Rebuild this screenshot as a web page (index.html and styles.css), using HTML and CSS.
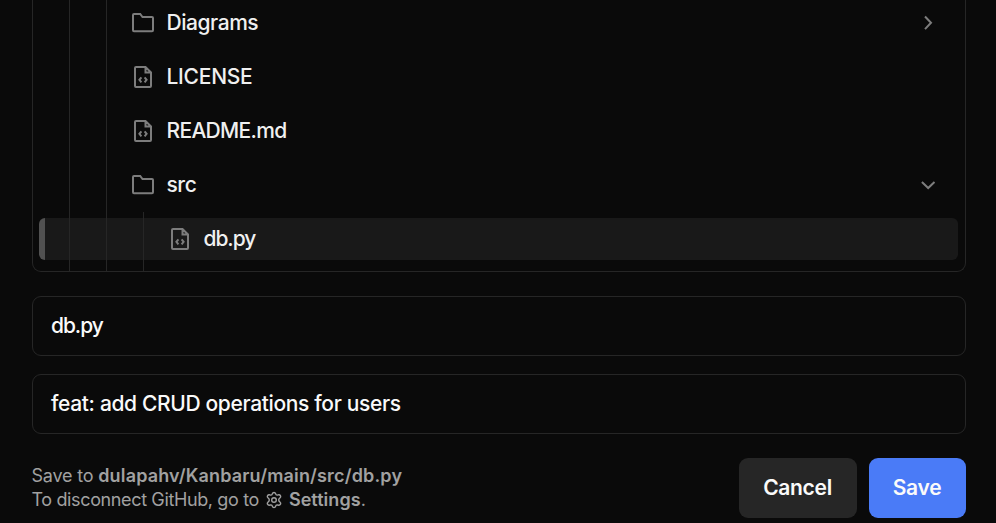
FILE: index.html
```html
<!DOCTYPE html>
<html lang="en">
<head>
<meta charset="utf-8">
<title>Save to GitHub</title>
<link rel="stylesheet" href="styles.css">
</head>
<body>
<svg class="sprite" aria-hidden="true">
  <symbol id="folder" viewBox="0 0 24 24"><path d="M2 19.200V4q0-1 1-1h6.200l2.300 3H21q1 0 1 1v12.200q0 1-1 1H3q-1 0-1-1z"/></symbol>
  <symbol id="file" viewBox="0 0 24 24"><path d="M14.500 2H5q-1 0-1 1v18q0 1 1 1h14q1 0 1-1V7.500zM14.500 2v5.500H20M10.400 12.300 8.400 14.800l2 2.500M13.600 12.300l2 2.500-2 2.500"/></symbol>
  <symbol id="chevron" viewBox="0 0 24 24"><path d="m9 5.500 6 6.300-6 6.300"/></symbol>
  <symbol id="gear" viewBox="0 0 18 18"><path d="M9 1.500q1.300 0 1.600 1.200.3 1.500 1.600 1.400l1.500-.3q1.200-.1 1.800 1 .6 1.200-.4 2-1.400 1.100-1.400 2.200t1.400 2.200q1 .8.4 2-.6 1.100-1.800 1l-1.500-.3q-1.300-.1-1.600 1.400Q10.300 16.500 9 16.500t-1.600-1.200q-.3-1.500-1.600-1.400l-1.500.3q-1.200.1-1.800-1-.6-1.200.4-2Q4.300 10.100 4.300 9T2.900 6.800q-1-.8-.4-2 .6-1.100 1.800-1l1.500.3q1.300.1 1.600-1.400Q7.700 1.500 9 1.500z"/><circle cx="9" cy="9" r="2.300"/></symbol>
</svg>
<main class="dialog">
  <div class="tree">
    <div class="branch">
      <div class="branch inner">
        <div class="row"><svg class="icon"><use href="#folder"/></svg><span class="name">Diagrams</span><svg class="icon arrow"><use href="#chevron"/></svg></div>
        <div class="row"><svg class="icon"><use href="#file"/></svg><span class="name license">LICENSE</span></div>
        <div class="row"><svg class="icon"><use href="#file"/></svg><span class="name readme">README.md</span></div>
        <div class="row"><svg class="icon"><use href="#folder"/></svg><span class="name">src</span><svg class="icon arrow open"><use href="#chevron"/></svg></div>
        <div class="branch leaf">
          <div class="row selected"><svg class="icon"><use href="#file"/></svg><span class="name python">db.py</span></div>
        </div>
      </div>
    </div>
  </div>
  <div class="field python">db.py</div>
  <div class="field message">feat: add CRUD operations for users</div>
  <footer class="footer">
    <div class="note">
      <div>Save to <b class="path">dulapahv/Kanbaru/main/src/db.py</b></div>
      <div class="line"><span class="hint">To disconnect GitHub, go to</span><svg class="gear"><use href="#gear"/></svg><b class="settings">Settings</b>.</div>
    </div>
    <div class="actions">
      <button class="button cancel">Cancel</button>
      <button class="button save">Save</button>
    </div>
  </footer>
</main>
</body>
</html>
```
FILE: styles.css
```css
* { box-sizing: border-box; }
body { margin: 0; background: #0a0a0a; color: #fafafa; font: 500 21px/30px Inter, sans-serif; overflow: hidden; }
.sprite { position: absolute; width: 0; height: 0; }
.dialog { width: 934px; margin-left: 32px; }
.tree { height: 272px; border: 1px solid #262626; border-top: 0; border-radius: 0 0 9px 9px; padding-left: 36px; position: relative; z-index: 0; }
.branch { border-left: 1px solid #262626; height: 271px; padding-left: 36px; }
.inner { padding: 2px 0 0; }
.row { height: 42px; margin-bottom: 12px; display: flex; align-items: center; padding: 0 25px 0 24px; gap: 12px; color: #f0f0f0; }
.name { letter-spacing: -.45px; margin-left: -.5px; }
.license { letter-spacing: -.25px; }
.readme { letter-spacing: -.68px; }
.icon { width: 24px; height: 24px; fill: none; stroke: #7d7d7d; stroke-width: 2; flex: none; }
.arrow { margin-left: auto; }
.open { transform: rotate(90deg); }
.leaf { height: 59px; margin: -6px 0 0 36px; padding: 6px 0 0; }
.selected { position: relative; }
.selected::before { content: ""; position: absolute; z-index: -1; left: -105px; right: 7px; top: 0; bottom: 0; border-radius: 6px; background: linear-gradient(90deg, #515151 6px, #191919 6px); }
.field { height: 60px; margin-top: 24px; border: 1px solid #262626; border-radius: 9px; padding: 14px 18px; }
.python { letter-spacing: -1.05px; }
.message { margin-top: 18px; letter-spacing: -.35px; }
.footer { margin-top: 24px; display: flex; justify-content: space-between; }
.note { margin: 6px 0 0 -.5px; font: 400 18px/24px Inter, sans-serif; color: #a1a1a1; letter-spacing: -.2px; }
.note b { font-weight: 600; }
.path { letter-spacing: .16px; }
.hint { letter-spacing: -.37px; }
.settings { letter-spacing: .05px; }
.line { display: flex; align-items: center; }
.gear { width: 18px; height: 18px; margin: 0 6px 0 6px; fill: none; stroke: #a1a1a1; stroke-width: 1.4; }
.actions { display: flex; gap: 12px; }
.button { height: 60px; border: 0; border-radius: 9px; color: #fafafa; font: 600 21px/30px Inter, sans-serif; letter-spacing: -.3px; padding: 0 1px 0 0; }
.cancel { width: 118px; background: #262626; }
.save { width: 97px; background: #4a7bf7; }
```
